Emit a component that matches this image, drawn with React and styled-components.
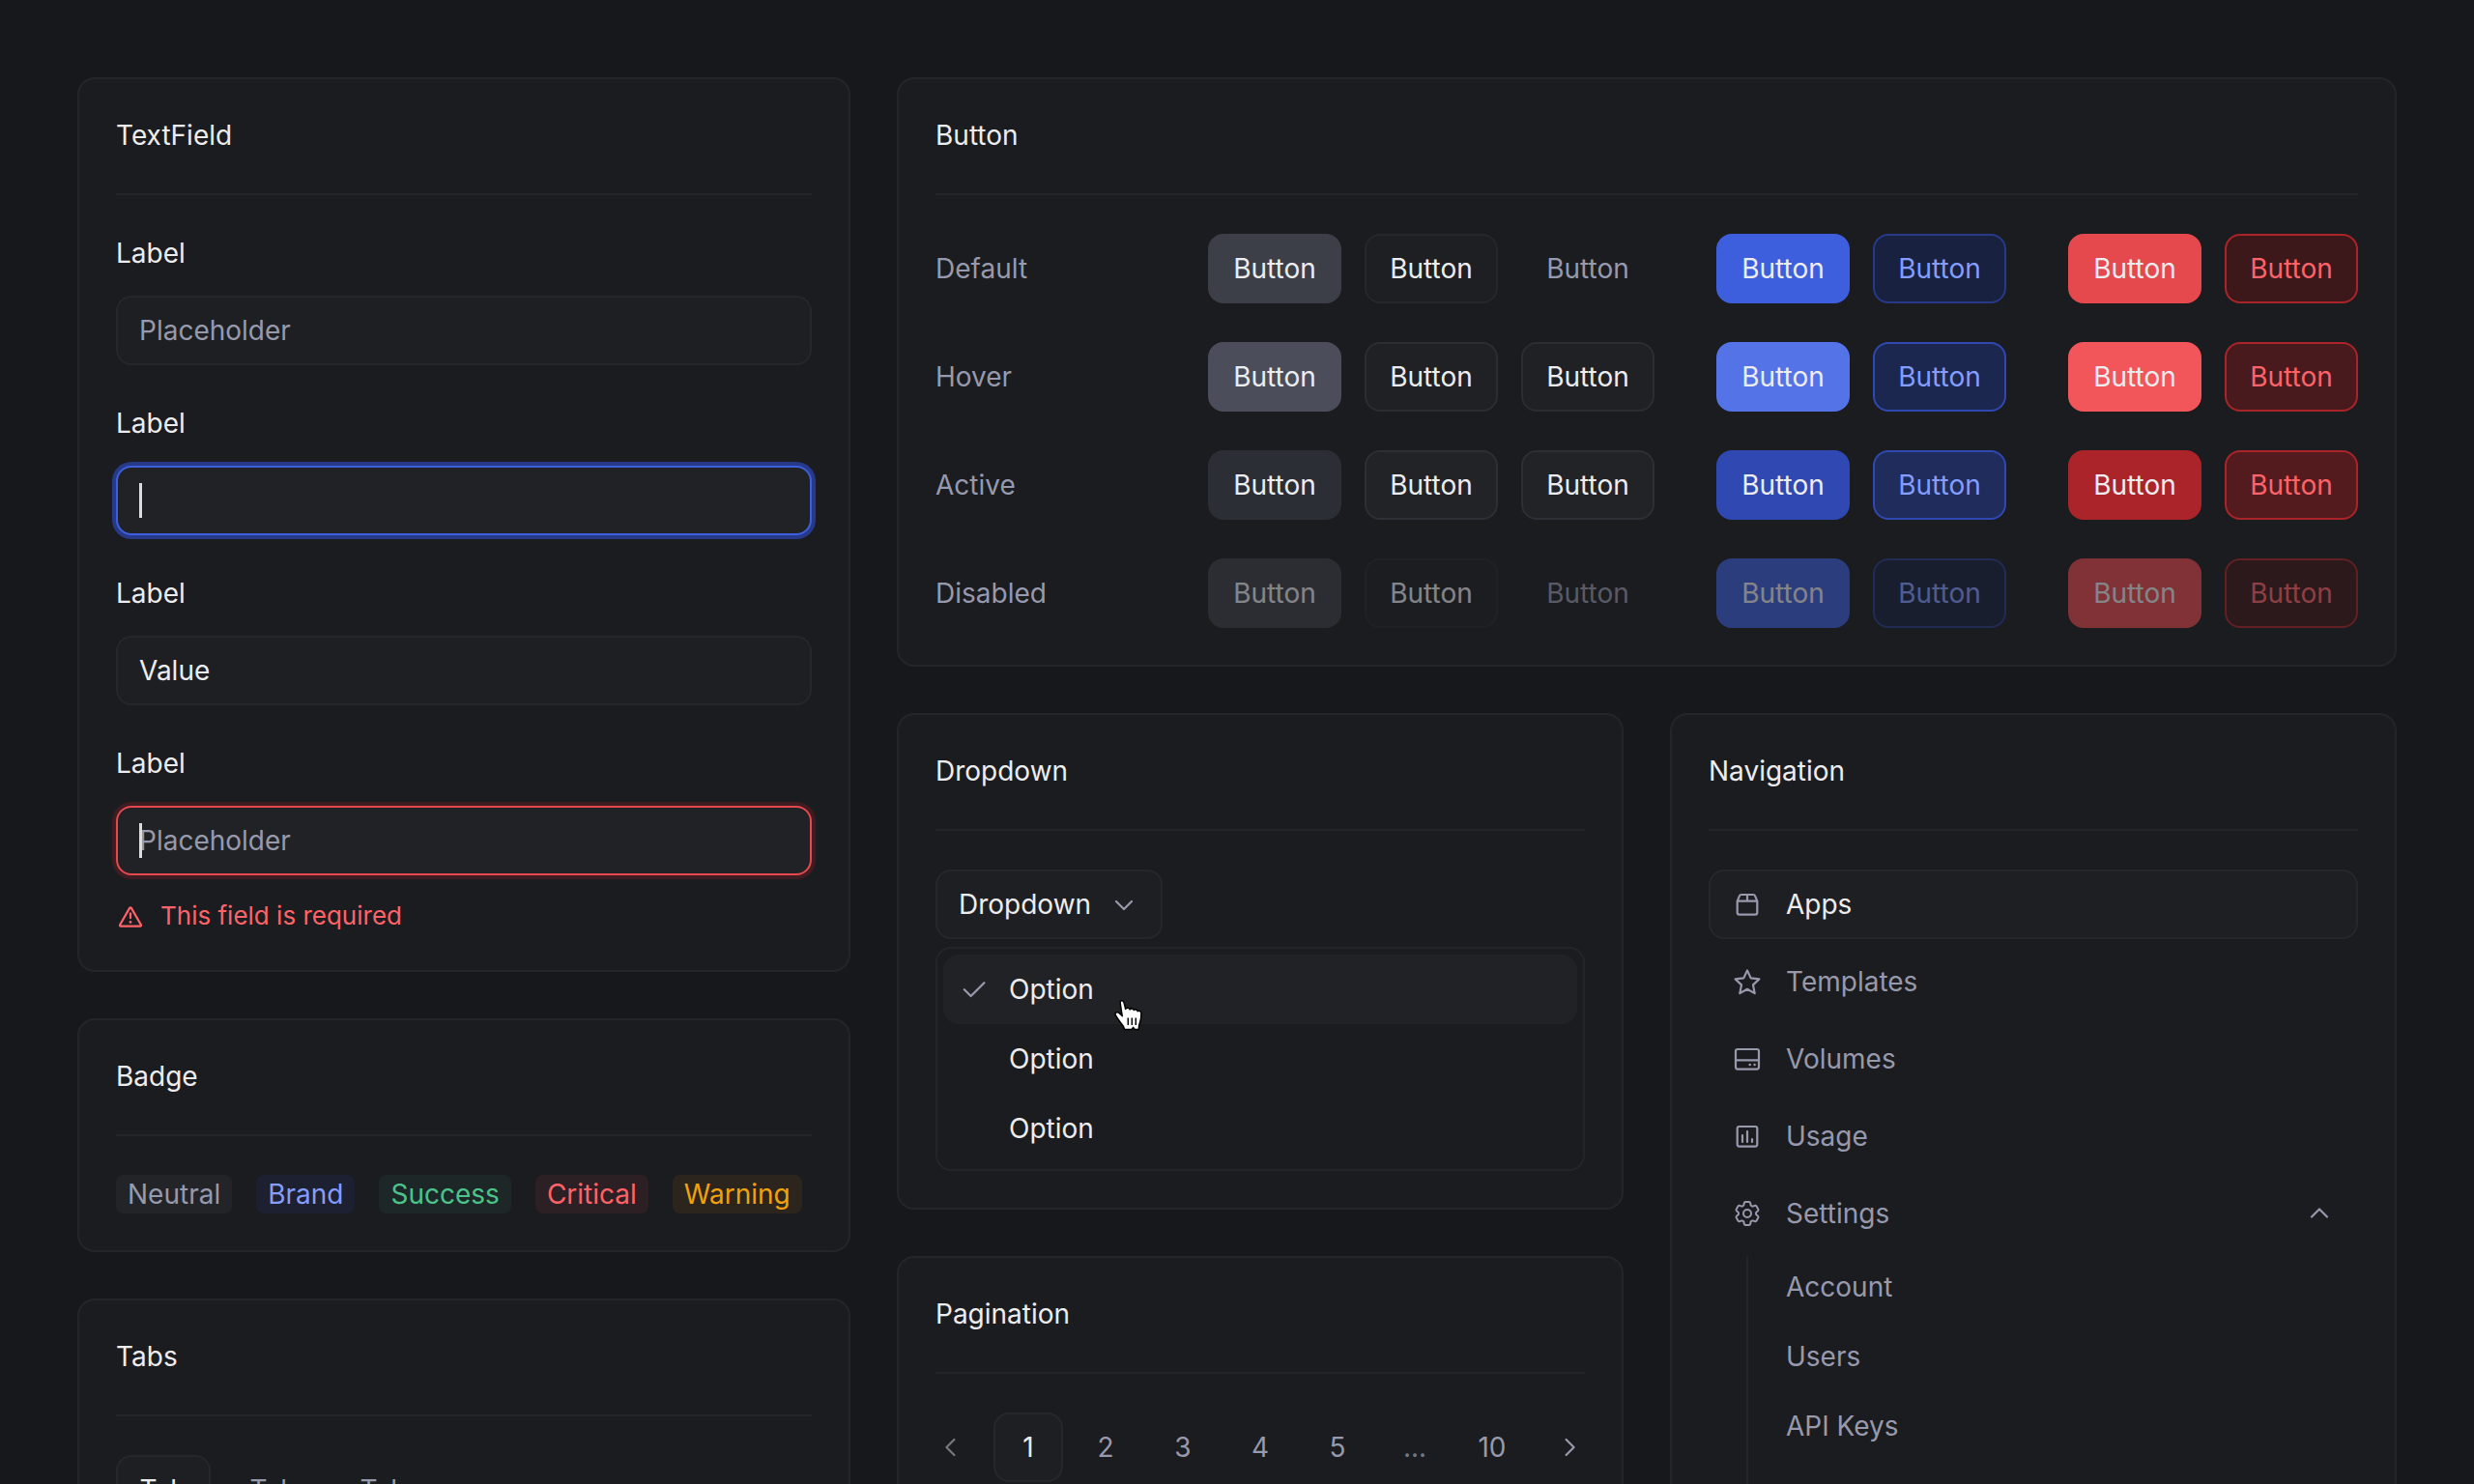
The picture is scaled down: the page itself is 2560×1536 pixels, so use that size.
import { useState } from 'react';
import { HiOutlineCog6Tooth } from 'react-icons/hi2';
import styled, { createGlobalStyle, css } from 'styled-components';

const states = ['Default', 'Hover', 'Active', 'Disabled'];

const groups = [
    ['solid', 'outline', 'ghost'],
    ['brand', 'brandOutline'],
    ['critical', 'criticalOutline'],
];

// [background, border, text] for each state
const palette = {
    solid: {
        Default: ['#3d3f48', '#3d3f48', '#ededef'],
        Hover: ['#4b4d5b', '#4b4d5b', '#ededef'],
        Active: ['#2c2e36', '#2c2e36', '#ededef'],
    },
    outline: {
        Default: ['#1e1f23', '#26272b', '#ededef'],
        Hover: ['#202125', '#2c2d33', '#ededef'],
        Active: ['#222327', '#2e2f36', '#ededef'],
    },
    ghost: {
        Default: ['transparent', 'transparent', '#9799ac'],
        Hover: ['#202125', '#2c2d33', '#ededef'],
        Active: ['#222327', '#2e2f36', '#ededef'],
    },
    brand: {
        Default: ['#3e5fdd', '#3e5fdd', '#ededef'],
        Hover: ['#5373e7', '#5373e7', '#ededef'],
        Active: ['#2f48b2', '#2f48b2', '#ededef'],
    },
    brandOutline: {
        Default: ['#192140', '#273a89', '#849dff'],
        Hover: ['#1c274f', '#2f48b2', '#849dff'],
        Active: ['#1f2c5c', '#2f48b2', '#849dff'],
    },
    critical: {
        Default: ['#e5484d', '#e5484d', '#ededef'],
        Hover: ['#f2555a', '#f2555a', '#ededef'],
        Active: ['#aa2429', '#aa2429', '#ededef'],
    },
    criticalOutline: {
        Default: ['#3c181a', '#aa2429', '#ff6369'],
        Hover: ['#481a1d', '#aa2429', '#ff6369'],
        Active: ['#541b1f', '#aa2429', '#ff6369'],
    },
};

const badges = [
    { name: 'Neutral', color: '#9799ac', bg: '#232428' },
    { name: 'Brand', color: '#849dff', bg: '#1c2031' },
    { name: 'Success', color: '#4cc38a', bg: '#1d2727' },
    { name: 'Critical', color: '#ff6369', bg: '#2c2024' },
    { name: 'Warning', color: '#f1a10d', bg: '#2b251e' },
];

const pages = ['1', '2', '3', '4', '5', '...', '10'];

function Icon({ children, size = 32 }){
    return(
        <Svg $size={size} viewBox={`0 0 ${size} ${size}`} strokeWidth="2.2" aria-hidden="true">
            {children}
        </Svg>
    )
}

const BoxIcon = () => (
    <Icon>
        <path d="M5.7 12.6V24.4a2.2 2.2 0 0 0 2.2 2.2h16.2a2.2 2.2 0 0 0 2.2-2.2V12.6zl2.2-5.2a2.2 2.2 0 0 1 2-1.4h12.2a2.2 2.2 0 0 1 2 1.4l2.2 5.2M16 6v6.6" />
    </Icon>
)

const StarIcon = () => (
    <Icon>
        <path d="M16 4.4l3.7 8 8.7 1-6.4 6 1.7 8.7-7.7-4.3-7.7 4.3 1.7-8.7-6.4-6 8.7-1z" />
    </Icon>
)

const VolumeIcon = () => (
    <Icon>
        <rect x="4" y="6" width="24" height="20.6" rx="2" />
        <path d="M4 17.4h24" />
        <circle cx="18.7" cy="22" r="1.3" fill="currentColor" stroke="none" />
        <circle cx="23.6" cy="22" r="1.3" fill="currentColor" stroke="none" />
    </Icon>
)

const UsageIcon = () => (
    <Icon>
        <rect x="5.7" y="6" width="20.6" height="20.6" rx="2" />
        <path d="M11 15v7M16 11v11M21 19v3" />
    </Icon>
)

const AlertIcon = () => (
    <Icon size={30}>
        <path d="M14.1 6.9a1 1 0 0 1 1.8 0l10 17.3a1 1 0 0 1-.9 1.5H5a1 1 0 0 1-.9-1.5z" />
        <path d="M15 12.4v4.8" />
        <circle cx="15" cy="21.4" r="1.4" fill="currentColor" stroke="none" />
    </Icon>
)

const CheckIcon = () => <Icon><path d="M5.8 16.2l6.800 6.800L26.400 9.200" /></Icon>
const DownIcon = () => <Icon><path d="M8 13l8 8 8-8" /></Icon>
const UpIcon = () => <Icon><path d="M8 19.500l8-8 8 8" /></Icon>
const LeftIcon = () => <Icon><path d="M19.400 8l-8 8 8 8" /></Icon>
const RightIcon = () => <Icon><path d="M12.600 8l8 8-8 8" /></Icon>

const links = [
    { name: 'Apps', icon: <BoxIcon /> },
    { name: 'Templates', icon: <StarIcon /> },
    { name: 'Volumes', icon: <VolumeIcon /> },
    { name: 'Usage', icon: <UsageIcon /> },
];

function Panel({ title, children }){
    return(
        <Card>
            <CardTitle>{title}</CardTitle>
            {children}
        </Card>
    )
}

function TextField({ id, status, caret, placeholder, value, error }){
    return(
        <Field>
            <label htmlFor={id}>Label</label>
            <InputBox>
                <Input
                    id={id}
                    type="text"
                    $status={status}
                    placeholder={placeholder}
                    defaultValue={value}
                    aria-invalid={Boolean(error)}
                    aria-describedby={error ? `${id}-error` : undefined}
                />
                {caret && <Caret />}
            </InputBox>
            {error && <FieldError id={`${id}-error`}><AlertIcon />{error}</FieldError>}
        </Field>
    )
}

function Dropdown(){
    const [selected, setSelected] = useState(0);

    return(
        <Panel title="Dropdown">
            <DropdownButton type="button" aria-haspopup="listbox" aria-expanded="true">
                Dropdown
                <DownIcon />
            </DropdownButton>
            <Options role="listbox" aria-label="Dropdown">
                {[0, 1, 2].map((i) => (
                    <Option
                        key={i}
                        type="button"
                        role="option"
                        aria-selected={selected === i}
                        $selected={selected === i}
                        onClick={() => setSelected(i)}
                    >
                        <OptionMark>{selected === i && <CheckIcon />}</OptionMark>
                        Option
                        {i === 0 && <HandCursor />}
                    </Option>
                ))}
            </Options>
        </Panel>
    )
}

function HandCursor(){
    return(
        <Hand viewBox="0 0 32 34" aria-hidden="true">
            <path
                d="M7.2 4.4C6.8 2.6 8 1.6 9.2 1.8c1.2.2 1.7 1.2 2 2.6l1.5 6c.8-1.6 3.8-1.6 4.4.5.9-1.5 3.7-1.3 4.2.7 1-1.3 3.6-.8 4 1.2 1.4-1.2 3.6-.2 3.6 2 0 4.2-.1 6.2-1.3 9.2-1 2.4-1.4 4-1.4 7.4h-4l-1.6-2-1.6 2h-7.4c-.6-2.4-1.8-4.400-3.800-6.600-2.400-2.800-3.800-5.400-5.400-7.800C1 14.600 3.600 12.800 5.600 14.200c1.400 1 2.400 2 3.600 3.400z"
                fill="#fff"
                stroke="#000"
                strokeWidth="1.5"
                strokeLinejoin="round"
            />
            <path d="M15.3 19.5v7.5M19.3 19.5v7.5M23.3 19.5v7.5" stroke="#000" strokeWidth="1.5" />
        </Hand>
    )
}

function Pagination(){
    const [page, setPage] = useState('1');

    return(
        <Panel title="Pagination">
            <Pager aria-label="Pagination">
                <Arrow type="button" aria-label="Previous" disabled={page === '1'}><LeftIcon /></Arrow>
                <PageList>
                    {pages.map((p) => p === '...'
                        ? <Dots key={p}>{p}</Dots>
                        : <PageButton key={p} type="button" $active={page === p} onClick={() => setPage(p)}>{p}</PageButton>
                    )}
                </PageList>
                <Arrow type="button" aria-label="Next"><RightIcon /></Arrow>
            </Pager>
        </Panel>
    )
}

function Navigation(){
    return(
        <Panel title="Navigation">
            <Nav>
                {links.map((l, i) => (
                    <NavLink key={l.name} href="#" $active={i === 0}>{l.icon}<span>{l.name}</span></NavLink>
                ))}
                <NavLink as="button" type="button" aria-expanded="true">
                    <HiOutlineCog6Tooth size={32} />
                    <span>Settings</span>
                    <UpIcon />
                </NavLink>
                <SubNav>
                    {['Account', 'Users', 'API Keys'].map((s) => <SubLink key={s} href="#">{s}</SubLink>)}
                </SubNav>
            </Nav>
        </Panel>
    )
}

export default function App(){
    const [tab, setTab] = useState(0);

    return(
        <Page>
            <GlobalStyle />
            <Column>
                <Panel title="TextField">
                    <Fields>
                        <TextField id="field-empty" placeholder="Placeholder" />
                        <TextField id="field-focus" status="focus" caret />
                        <TextField id="field-value" value="Value" />
                        <TextField id="field-error" status="error" caret placeholder="Placeholder" error="This field is required" />
                    </Fields>
                </Panel>

                <Panel title="Badge">
                    <Badges>
                        {badges.map((b) => <Badge key={b.name} $color={b.color} $bg={b.bg}>{b.name}</Badge>)}
                    </Badges>
                </Panel>

                <Panel title="Tabs">
                    <TabList role="tablist">
                        {[0, 1, 2].map((t) => (
                            <Tab key={t} type="button" role="tab" aria-selected={tab === t} $active={tab === t} onClick={() => setTab(t)}>Tab</Tab>
                        ))}
                    </TabList>
                </Panel>
            </Column>

            <Column>
                <Panel title="Button">
                    <ButtonRows>
                        {states.map((state) => (
                            <ButtonRow key={state}>
                                <StateName>{state}</StateName>
                                {groups.map((group) => (
                                    <ButtonGroup key={group[0]}>
                                        {group.map((kind) => (
                                            <Button
                                                key={kind}
                                                type="button"
                                                disabled={state === 'Disabled'}
                                                $tone={palette[kind][state] || palette[kind].Default}
                                            >
                                                Button
                                            </Button>
                                        ))}
                                    </ButtonGroup>
                                ))}
                            </ButtonRow>
                        ))}
                    </ButtonRows>
                </Panel>

                <Split>
                    <Column>
                        <Dropdown />
                        <Pagination />
                    </Column>
                    <Navigation />
                </Split>
            </Column>
        </Page>
    )
}

const GlobalStyle = createGlobalStyle`
    * {
        box-sizing: border-box;
    }
    body {
        margin: 0;
        background: #17181b;
        color: #ededef;
        font-family: Inter, "Liberation Sans", sans-serif;
        font-size: 28px;
        line-height: 40px;
    }
    button, input {
        font: inherit;
        color: inherit;
        margin: 0;
    }
`

const Page = styled.main`
    height: 100vh;
    overflow: hidden;
    padding: 80px;
    display: grid;
    grid-template-columns: minmax(0, 50fr) minmax(0, 97fr);
    gap: 48px;
    align-items: start;
`

const Column = styled.div`
    display: flex;
    flex-direction: column;
    gap: 48px;
    min-width: 0;
`

const Split = styled.div`
    display: grid;
    grid-template-columns: minmax(0, 1fr) minmax(0, 1fr);
    gap: 48px;
    align-items: start;
`

const Card = styled.section`
    padding: 38px;
    background: #1b1c1f;
    border: 2px solid #242529;
    border-radius: 18px;
`

const CardTitle = styled.h2`
    margin: 0 0 40px;
    padding-bottom: 40px;
    border-bottom: 2px solid #242529;
    font-size: 28px;
    font-weight: 400;
`

const Svg = styled.svg`
    flex: none;
    width: ${props => props.$size}px;
    height: ${props => props.$size}px;
    fill: none;
    stroke: currentColor;
    stroke-linecap: round;
    stroke-linejoin: round;
`

const Fields = styled.div`
    display: flex;
    flex-direction: column;
    gap: 40px;
`

const Field = styled.div`
    display: flex;
    flex-direction: column;
    gap: 24px;
`

const InputBox = styled.div`
    position: relative;
`

const Input = styled.input`
    display: block;
    width: 100%;
    height: 72px;
    padding: 0 22px;
    background: #1e1f23;
    border: 2px solid #26272b;
    border-radius: 16px;
    outline: none;

    &::placeholder{
        color: #9799ac;
        opacity: 1;
    }

    ${props => props.$status === 'focus' && css`
        background: #212226;
        border-color: #3e5fdd;
        box-shadow: 0 0 0 4px #273a89;
    `}

    ${props => props.$status === 'error' && css`
        background: #212226;
        border-color: #e5484d;
        box-shadow: 0 0 0 4px #3f1c21;
    `}
`

const Caret = styled.span`
    position: absolute;
    top: 18px;
    left: 24px;
    width: 3px;
    height: 36px;
    background: #dcdcde;
`

const FieldError = styled.p`
    display: flex;
    align-items: center;
    gap: 16px;
    margin: 0;
    font-size: 26px;
    line-height: 36px;
    color: #ff6369;
`

const Badges = styled.div`
    display: flex;
    gap: 25px;
`

const Badge = styled.span`
    padding: 0 12px;
    border-radius: 8px;
    color: ${props => props.$color};
    background: ${props => props.$bg};
`

const TabList = styled.div`
    display: flex;
    gap: 16px;
`

const raised = css`
    color: #ededef;
    background: #1e1f23;
    border-color: #26272b;
`

const Tab = styled.button`
    min-width: 98px;
    height: 72px;
    padding: 0 22px;
    color: #9799ac;
    background: transparent;
    border: 2px solid transparent;
    border-radius: 16px;
    ${props => props.$active && raised}
`

const ButtonRows = styled.div`
    display: flex;
    flex-direction: column;
    gap: 40px;
`

const ButtonRow = styled.div`
    display: flex;
    align-items: center;
    gap: 64px;
`

const StateName = styled.span`
    flex: 1;
    color: #9799ac;
`

const ButtonGroup = styled.div`
    display: flex;
    gap: 24px;
`

const Button = styled.button`
    min-width: 138px;
    height: 72px;
    padding: 0 22px;
    border-radius: 16px;
    border: 2px solid ${props => props.$tone[1]};
    background: ${props => props.$tone[0]};
    color: ${props => props.$tone[2]};

    &:disabled{
        opacity: 0.5;
    }
`

const DropdownButton = styled.button`
    display: flex;
    align-items: center;
    gap: 18px;
    height: 72px;
    padding: 0 22px;
    border: 2px solid;
    border-radius: 16px;
    ${raised}

    svg{
        color: #9799ac;
    }
`

const Options = styled.div`
    margin-top: 8px;
    padding: 6px;
    border: 2px solid #242529;
    border-radius: 16px;
`

const Option = styled.button`
    position: relative;
    display: flex;
    align-items: center;
    gap: 20px;
    width: 100%;
    height: 72px;
    padding: 0 16px;
    border: none;
    border-radius: 16px;
    background: ${props => props.$selected ? '#212226' : 'transparent'};
`

const OptionMark = styled.span`
    display: flex;
    width: 32px;
    height: 32px;
    color: #9799ac;
`

const Hand = styled.svg`
    position: absolute;
    top: 46px;
    left: 176px;
    width: 32px;
    height: 34px;
    z-index: 1;
`

const Pager = styled.nav`
    display: flex;
    align-items: center;
    justify-content: space-between;
`

const PageList = styled.div`
    display: flex;
    gap: 8px;
`

const PageButton = styled.button`
    width: 72px;
    height: 72px;
    padding: 0;
    color: #9799ac;
    background: transparent;
    border: 2px solid transparent;
    border-radius: 16px;
    ${props => props.$active && raised}
`

const Dots = styled.span`
    width: 72px;
    line-height: 72px;
    text-align: center;
    color: #77787d;
`

const Arrow = styled.button`
    display: flex;
    padding: 0;
    border: none;
    background: none;
    color: #9799ac;

    &:disabled{
        color: #77787d;
    }
`

const Nav = styled.nav`
    display: flex;
    flex-direction: column;
    gap: 8px;
`

const NavLink = styled.a`
    display: flex;
    align-items: center;
    gap: 24px;
    height: 72px;
    padding: 0 22px;
    color: #9799ac;
    background: transparent;
    border: 2px solid transparent;
    border-radius: 16px;
    text-align: left;
    text-decoration: none;
    ${props => props.$active && raised}

    svg{
        color: #9799ac;
    }
    span{
        flex: 1;
    }
`

const SubNav = styled.div`
    display: flex;
    flex-direction: column;
    gap: 8px;
    margin-left: 39px;
    padding-bottom: 40px;
    border-left: 2px solid #242529;
`

const SubLink = styled.a`
    padding: 12px 39px;
    color: #9799ac;
    text-decoration: none;
`
